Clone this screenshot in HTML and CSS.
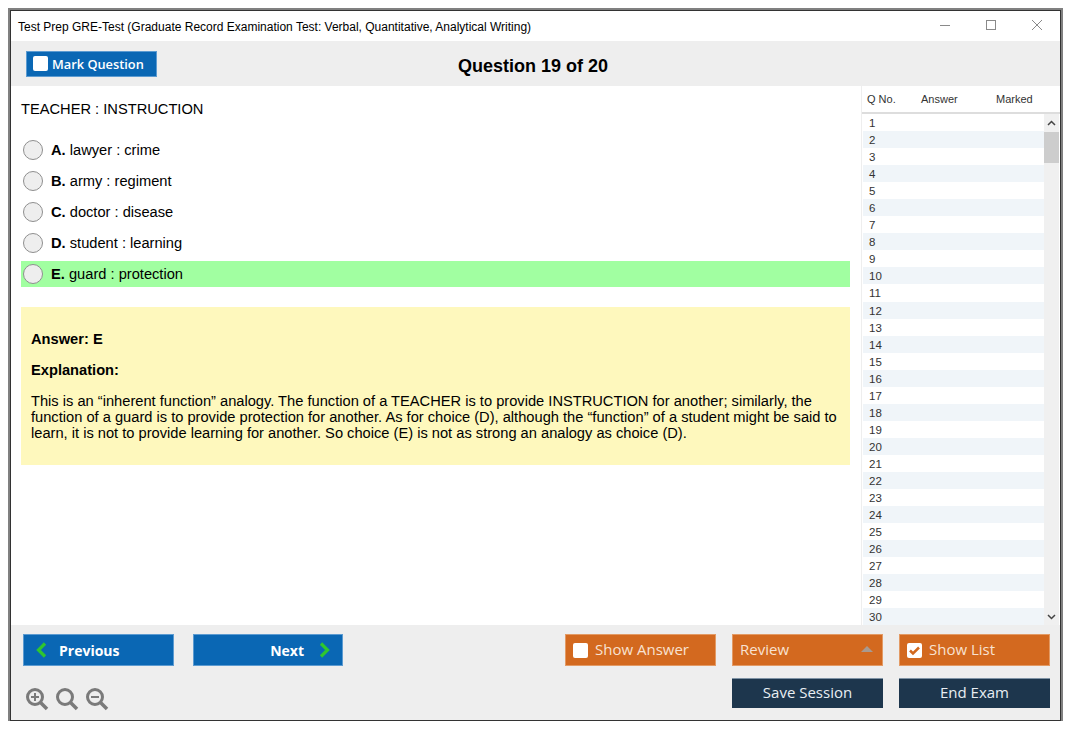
FILE: index.html
```html
<!DOCTYPE html>
<html lang="en">
<head>
<meta charset="utf-8">
<title>Test Prep GRE-Test</title>
<link rel="stylesheet" href="styles.css">
</head>
<body>
<div class="window">
  <header class="titlebar">
    <span class="title">Test Prep GRE-Test (Graduate Record Examination Test: Verbal, Quantitative, Analytical Writing)</span>
    <div class="controls">
      <svg width="12" height="12" viewBox="0 0 12 12"><path d="M1 6.500h10" stroke="#8a8a8a" fill="none"/></svg>
      <svg width="12" height="12" viewBox="0 0 12 12"><rect x="1.500" y="1.500" width="9" height="9" stroke="#8a8a8a" fill="none"/></svg>
      <svg width="12" height="12" viewBox="0 0 12 12"><path d="M1 1l10 10M11 1L1 11" stroke="#8a8a8a" fill="none"/></svg>
    </div>
  </header>
  <div class="toolbar">
    <button class="btn btn-blue mark"><span class="check"></span><span class="lbl">Mark Question</span></button>
    <h1 class="qnum">Question 19 of 20</h1>
  </div>
  <div class="middle">
    <main class="question">
      <p class="stem">TEACHER : INSTRUCTION</p>
      <div class="options">
        <div class="option"><span class="radio"></span><span><b>A.</b> lawyer : crime</span></div>
        <div class="option"><span class="radio"></span><span><b>B.</b> army : regiment</span></div>
        <div class="option"><span class="radio"></span><span><b>C.</b> doctor : disease</span></div>
        <div class="option"><span class="radio"></span><span><b>D.</b> student : learning</span></div>
        <div class="option correct"><span class="radio"></span><span><b>E.</b> guard : protection</span></div>
      </div>
      <section class="explain">
        <p class="ex-head">Answer: E</p>
        <p class="ex-head">Explanation:</p>
        <p class="ex-body">This is an “inherent function” analogy. The function of a TEACHER is to provide INSTRUCTION for another; similarly, the function of a guard is to provide protection for another. As for choice (D), although the “function” of a student might be said to learn, it is not to provide learning for another. So choice (E) is not as strong an analogy as choice (D).</p>
      </section>
    </main>
    <aside class="list">
      <div class="list-head"><span class="c1">Q No.</span><span class="c2">Answer</span><span class="c3">Marked</span></div>
      <div class="list-body">
        <div class="rows">
          <div class="row">1</div><div class="row">2</div><div class="row">3</div><div class="row">4</div><div class="row">5</div>
          <div class="row">6</div><div class="row">7</div><div class="row">8</div><div class="row">9</div><div class="row">10</div>
          <div class="row">11</div><div class="row">12</div><div class="row">13</div><div class="row">14</div><div class="row">15</div>
          <div class="row">16</div><div class="row">17</div><div class="row">18</div><div class="row">19</div><div class="row">20</div>
          <div class="row">21</div><div class="row">22</div><div class="row">23</div><div class="row">24</div><div class="row">25</div>
          <div class="row">26</div><div class="row">27</div><div class="row">28</div><div class="row">29</div><div class="row">30</div>
        </div>
        <div class="scrollbar">
          <svg class="arrow" width="15" height="18" viewBox="0 0 15 18"><path d="M4 11l3.500-3.500L11 11" stroke="#444" stroke-width="1.500" fill="none"/></svg>
          <div class="thumb"></div>
          <div class="track"></div>
          <svg class="arrow" width="15" height="16" viewBox="0 0 15 16"><path d="M4 6l3.500 3.500L11 6" stroke="#444" stroke-width="1.500" fill="none"/></svg>
        </div>
      </div>
    </aside>
  </div>
  <footer class="footer">
    <div class="foot-left">
      <div class="nav">
        <button class="btn btn-blue navbtn prev">
          <svg width="12" height="16" viewBox="0 0 12 16"><path d="M10 1.500L3.500 8 10 14.500" stroke="#2fc62f" stroke-width="3.200" fill="none"/></svg>
          <span class="lbl">Previous</span>
        </button>
        <button class="btn btn-blue navbtn next">
          <span class="lbl">Next</span>
          <svg width="12" height="16" viewBox="0 0 12 16"><path d="M2 1.500L8.500 8 2 14.500" stroke="#2fc62f" stroke-width="3.200" fill="none"/></svg>
        </button>
      </div>
      <div class="zoom">
        <svg width="24" height="24" viewBox="0 0 24 24"><circle cx="10" cy="10" r="7.500" stroke="#7a7a7a" stroke-width="3" fill="none"/><path d="M15.500 15.500L22 22" stroke="#7a7a7a" stroke-width="3.500" fill="none"/><path d="M6 10h8M10 6v8" stroke="#7a7a7a" stroke-width="2" fill="none"/></svg>
        <svg width="24" height="24" viewBox="0 0 24 24"><circle cx="10" cy="10" r="7.500" stroke="#7a7a7a" stroke-width="3" fill="none"/><path d="M15.500 15.500L22 22" stroke="#7a7a7a" stroke-width="3.500" fill="none"/></svg>
        <svg width="24" height="24" viewBox="0 0 24 24"><circle cx="10" cy="10" r="7.500" stroke="#7a7a7a" stroke-width="3" fill="none"/><path d="M15.500 15.500L22 22" stroke="#7a7a7a" stroke-width="3.500" fill="none"/><path d="M6 10h8" stroke="#7a7a7a" stroke-width="2" fill="none"/></svg>
      </div>
    </div>
    <div class="foot-right">
      <button class="btn btn-orange"><span class="check"></span><span class="lbl">Show Answer</span></button>
      <button class="btn btn-orange review"><span class="lbl">Review</span><span class="caret"></span></button>
      <button class="btn btn-orange"><span class="check"><svg width="15" height="15" viewBox="0 0 15 15"><path d="M3 7.500l3 3 6-6" stroke="#d2691f" stroke-width="2.500" fill="none"/></svg></span><span class="lbl">Show List</span></button>
      <button class="btn btn-navy slot2"><span class="lbl">Save Session</span></button>
      <button class="btn btn-navy"><span class="lbl">End Exam</span></button>
    </div>
  </footer>
</div>
</body>
</html>
```
FILE: styles.css
```css
* { box-sizing: border-box; }
html, body { margin: 0; padding: 0; background: #fff; }
body { padding: 10px 0 0 10px; font-family: "Liberation Sans", Arial, sans-serif; color: #000; }
.window {
  width: 1051px;
  height: 711px;
  border: 1px solid #333;
  outline: 2px solid #808080;
  display: flex;
  flex-direction: column;
  background: #fff;
}
.titlebar {
  height: 30px;
  flex: none;
  display: flex;
  align-items: center;
  justify-content: space-between;
  padding: 2px 17px 0 7px;
}
.title { font-size: 12px; }
.controls { display: flex; gap: 34px; align-items: center; margin-bottom: 5px; }
.controls svg { display: block; }
.toolbar {
  height: 45px;
  flex: none;
  background: #eee;
  display: flex;
  align-items: center;
  position: relative;
  padding: 0 0 0 15px;
}
.qnum {
  position: absolute;
  left: 0;
  right: 0;
  top: 14px;
  margin: 0;
  padding-right: 5px;
  text-align: center;
  font-size: 18px;
  line-height: 22px;
  font-weight: bold;
  pointer-events: none;
}
.btn {
  font-family: "Open Sans", "Noto Sans", sans-serif;
  border: 0;
  margin: 0;
  color: #fff;
  display: flex;
  align-items: center;
  font-size: 15px;
  padding: 0;
}
.lbl { display: block; margin-bottom: 2px; }
.btn-blue { background: #0a67b4; box-shadow: inset 0 0 0 1px #5c9bd1; font-weight: 600; }
.btn-orange { background: #d3691f; box-shadow: inset 0 0 0 1px #e39a64; padding-left: 8px; color: #f8e2d2; }
.btn-navy { background: #1d364d; box-shadow: inset 0 1px 0 #7f93a5; justify-content: center; color: #e9eef3; height: 30px; }
.mark { width: 131px; height: 26px; font-size: 12.800px; padding-left: 7px; }
.mark .lbl { margin-bottom: 0; }
.check {
  width: 15px;
  height: 15px;
  background: #fff;
  border-radius: 2px;
  margin-right: 7px;
  flex: none;
  display: block;
}
.mark .check { margin-right: 4px; }
.check svg { display: block; }
.middle { height: 539px; flex: none; display: flex; }
.question { width: 850px; flex: none; padding: 0 11px 0 10px; }
.stem { margin: 0; padding-top: 15px; font-size: 14.670px; line-height: 17px; height: 51px; }
.options { display: flex; flex-direction: column; gap: 5px; }
.option {
  height: 26px;
  display: flex;
  align-items: center;
  font-size: 14.670px;
  padding-left: 2px;
  gap: 8px;
}
.correct { background: #a1ffa1; }
.radio {
  width: 20px;
  height: 20px;
  border-radius: 50%;
  border: 1px solid #8f8f8f;
  background: #eee;
  flex: none;
}
.explain {
  margin-top: 20px;
  height: 158px;
  background: #fef8bd;
  padding: 24px 10px 0;
  font-size: 14.670px;
}
.ex-head { margin: 0 0 14px; font-weight: bold; line-height: 17px; }
.ex-body { margin: 0; line-height: 16px; }
.list { flex: 1; display: flex; flex-direction: column; min-width: 0; border-left: 1px solid #eee; }
.list-head {
  height: 28px;
  flex: none;
  border-bottom: 2px solid #ddd;
  display: flex;
  align-items: center;
  font-size: 11px;
  color: #333;
}
.c1 { width: 59px; padding-left: 5px; }
.c2 { width: 75px; }
.list-body { flex: 1; min-height: 0; display: flex; overflow: hidden; }
.rows { width: 182px; flex: none; overflow: hidden; padding-left: 1px; }
.row { height: 17.050px; line-height: 18px; font-size: 11.500px; padding-left: 6px; color: #333; }
.row:nth-child(even) { background: #f0f5f9; }
.scrollbar { width: 15px; flex: none; background: #f0f0f0; display: flex; flex-direction: column; }
.arrow { flex: none; display: block; }
.thumb { height: 31px; background: #cdcdcd; flex: none; }
.track { flex: 1; }
.footer {
  flex: 1;
  min-height: 0;
  background: #eee;
  display: flex;
  justify-content: space-between;
  padding: 9px 10px 0 12px;
}
.foot-left { display: flex; flex-direction: column; }
.nav { display: flex; gap: 19px; }
.navbtn { width: 150.500px; height: 32px; padding: 0 12px; font-size: 14px; font-weight: 700; }
.navbtn .lbl { margin-bottom: 0; }
.prev { gap: 12px; }
.next { justify-content: flex-end; gap: 15px; }
.zoom { display: flex; gap: 6px; margin-top: 21px; padding-left: 2px; }
.foot-right {
  display: grid;
  grid-template-columns: repeat(3, 151px);
  grid-auto-rows: 32px;
  column-gap: 16px;
  row-gap: 12px;
}
.foot-right .btn { width: 151px; }
.slot2 { grid-column: 2; }
.review { justify-content: space-between; padding-right: 10px; }
.caret { width: 0; height: 0; margin-bottom: 3px; border: 6px solid transparent; border-top: 0; border-bottom: 6px solid #a89a90; }
```
